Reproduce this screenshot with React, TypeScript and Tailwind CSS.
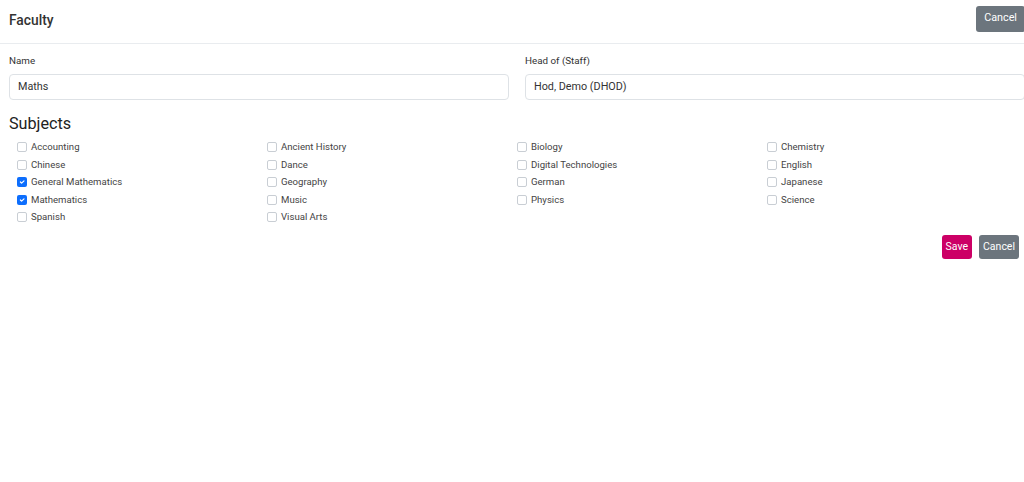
import React from "react";

const subjects: [string, boolean][] = [
  ["Accounting", false], ["Ancient History", false], ["Biology", false], ["Chemistry", false],
  ["Chinese", false], ["Dance", false], ["Digital Technologies", false], ["English", false],
  ["General Mathematics", true], ["Geography", false], ["German", false], ["Japanese", false],
  ["Mathematics", true], ["Music", false], ["Physics", false], ["Science", false],
  ["Spanish", false], ["Visual Arts", false],
];

function Box({ checked }: { checked: boolean }) {
  return checked ? (
    <span className="flex h-[10px] w-[10px] shrink-0 items-center justify-center rounded-[2px] bg-[#0d6efd]">
      <svg width="8" height="8" viewBox="0 0 20 20" fill="none">
        <path d="M6 10l3 3 6-6" stroke="#fff" strokeWidth="3" strokeLinecap="round" strokeLinejoin="round" />
      </svg>
    </span>
  ) : (
    <span className="h-[10px] w-[10px] shrink-0 rounded-[2px] border border-[#c9ced4] bg-white" />
  );
}

export default function App() {
  return (
    <div className="h-[482px] w-screen overflow-hidden bg-white text-[#212529]" style={{ fontFamily: "Roboto, 'Liberation Sans', sans-serif" }}>
      <div className="w-[1034px]">
        <div className="flex h-[44px] items-center justify-between border-b border-[#e9ecef] pl-[9px] pr-[9px]">
          <h1 className="mb-[1px] text-[13.8px] font-medium leading-none text-[#333]">Faculty</h1>
          <button className="mb-[6px] h-[26px] rounded-[3px] bg-[#6c757d] px-[8px] text-[10.8px] text-white">Cancel</button>
        </div>
        <div className="flex gap-[16px] px-[9px] pt-[11px]">
          <div className="flex-1">
            <div className="text-[9.8px] leading-[12px] text-[#333]">Name</div>
            <div className="mt-[7px] flex h-[26px] items-center rounded-[4px] border border-[#dee2e6] px-[8px] text-[10.8px] text-[#333]">Maths</div>
          </div>
          <div className="flex-1">
            <div className="text-[9.8px] leading-[12px] text-[#333]">Head of (Staff)</div>
            <div className="mt-[7px] flex h-[26px] items-center rounded-[4px] border border-[#dee2e6] px-[8px] text-[10.8px] text-[#333]">Hod, Demo (DHOD)</div>
          </div>
        </div>
        <h2 className="mt-[12px] px-[9px] text-[16.2px] leading-[24px] text-[#222]">Subjects</h2>
        <div className="ml-[17px] mt-[2.5px] grid w-[1000px] grid-cols-4">
          {subjects.map(([name, checked]) => (
            <label key={name} className="flex h-[17.5px] items-center gap-[4px] text-[9.6px] text-[#444]">
              <Box checked={checked} />
              <span>{name}</span>
            </label>
          ))}
        </div>
        <div className="mr-[15px] mt-[9px] flex justify-end gap-[7px]">
          <button className="h-[24px] rounded-[3px] bg-[#cc0066] px-[4px] text-[10.5px] text-white">Save</button>
          <button className="h-[24px] rounded-[3px] bg-[#6c757d] px-[4px] text-[10.5px] text-white">Cancel</button>
        </div>
      </div>
    </div>
  );
}
